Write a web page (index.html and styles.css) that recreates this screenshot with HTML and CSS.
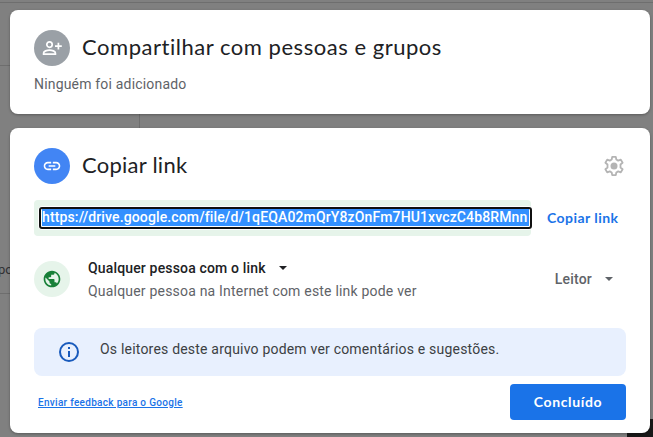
FILE: index.html
```html
<!DOCTYPE html>
<html lang="pt-BR">
<head>
<meta charset="utf-8">
<title>Compartilhar</title>
<link rel="stylesheet" href="styles.css">
</head>
<body>
<div class="backdrop">
  <i class="rule rule-top"></i><i class="rule rule-upper"></i><i class="rule rule-middle"></i><i class="rule rule-lower"></i>
  <span class="behind">po</span><i class="corner"></i>
</div>
<main class="dialog">
  <section class="card people">
    <header class="heading">
      <span class="disc gray"><svg width="24" height="24" viewBox="0 0 24 24" fill="none" stroke="#fff" stroke-width="1.7"><circle cx="9.5" cy="8.6" r="2.7"/><path d="M3.6 18.1v-1.1c0-1.8 3.4-2.9 5.9-2.9s5.9 1.1 5.9 2.9v1.1z"/><path d="M18.4 6.8v6.8M15 10.2h6.8"/></svg></span>
      <h1><span class="title-share">Compartilhar com pessoas e grupos</span></h1>
    </header>
    <p class="nobody">Ninguém foi adicionado</p>
  </section>
  <section class="card link-card">
    <header class="heading">
      <span class="disc blue"><svg width="20" height="20" viewBox="0 0 24 24" fill="#fff"><path d="M3.9 12c0-1.71 1.39-3.1 3.1-3.1h4V7H7c-2.76 0-5 2.24-5 5s2.24 5 5 5h4v-1.9H7c-1.71 0-3.1-1.39-3.1-3.1zM8 13h8v-2H8v2zm9-6h-4v1.9h4c1.71 0 3.1 1.39 3.1 3.1s-1.39 3.1-3.1 3.1h-4V17h4c2.76 0 5-2.24 5-5s-2.24-5-5-5z"/></svg></span>
      <h1><span class="title-copy">Copiar link</span></h1>
      <svg class="gear" width="24" height="24" viewBox="0 0 24 24"><path fill="none" stroke="#b4b4b4" stroke-width="1.8" stroke-linejoin="round" d="M10.2 2.8h3.6l.5 2.7 1.9 1.1 2.6-1 1.8 3.1-2.1 1.8v3l2.1 1.8-1.8 3.1-2.6-1-1.9 1.1-.5 2.7h-3.6l-.5-2.7-1.9-1.1-2.6 1-1.8-3.1 2.1-1.8v-3L3.400 8.700l1.800-3.100 2.600 1 1.900-1.100z"/><circle cx="12" cy="12" r="3.5" fill="#b4b4b4"/></svg>
    </header>
    <div class="url-row">
      <div class="url-bg"><div class="url-box"><span class="url">https://drive.google.com/file/d/1qEQA02mQrY8zOnFm7HU1xvczC4b8RMnn</span></div></div>
      <span class="copy">Copiar link</span>
    </div>
    <div class="access">
      <span class="disc green"><svg width="20" height="20" viewBox="0 0 24 24" fill="#188038"><path d="M12 2C6.480 2 2 6.480 2 12s4.480 10 10 10 10-4.480 10-10S17.520 2 12 2zm-1 17.930c-3.950-.49-7-3.850-7-7.930 0-.62.080-1.210.210-1.790L9 15v1c0 1.100.900 2 2 2v1.930zm6.900-2.540c-.26-.81-1-1.390-1.900-1.390h-1v-3c0-.55-.45-1-1-1H8v-2h2c.55 0 1-.45 1-1V7h2c1.100 0 2-.9 2-2v-.41c2.930 1.190 5 4.060 5 7.410 0 2.080-.8 3.970-2.100 5.390z"/></svg></span>
      <div class="who">
        <div class="who-name"><span>Qualquer pessoa com o link</span><i class="caret"></i></div>
        <div class="who-info">Qualquer pessoa na Internet com este link pode ver</div>
      </div>
      <div class="role"><span>Leitor</span><i class="caret"></i></div>
    </div>
    <div class="notice">
      <svg width="24" height="24" viewBox="0 0 24 24"><circle cx="12" cy="12" r="9" fill="none" stroke="#185abc" stroke-width="2"/><path fill="#185abc" d="M11 7h2v2h-2zM11 11h2v6h-2z"/></svg>
      <span>Os leitores deste arquivo podem ver comentários e sugestões.</span>
    </div>
    <footer class="actions">
      <a class="feedback">Enviar feedback para o Google</a>
      <button class="done">Concluído</button>
    </footer>
  </section>
</main>
</body>
</html>
```
FILE: styles.css
```css
* { box-sizing: border-box; }
body { margin: 0; height: 437px; overflow: hidden; background: #808080; font: 14px/20px Roboto, sans-serif; color: #202124; }
.backdrop { position: absolute; inset: 0; overflow: hidden; }
.rule { position: absolute; background: #6e6e6e; }
.rule-top { left: 0; top: 2px; width: 653px; height: 1px; }
.rule-upper { left: 0; top: 65px; width: 10px; height: 1px; }
.rule-middle { left: 139px; top: 114px; width: 1px; height: 14px; }
.rule-lower { left: 0; top: 293px; width: 10px; height: 1px; }
.behind { position: absolute; left: -2px; top: 260px; font-size: 13px; color: #303134; }
.corner { position: absolute; left: 627px; top: 419px; width: 26px; height: 18px; background: #181818; }
.dialog { position: relative; width: 640px; margin: 10px 0 0 10px; display: flex; flex-direction: column; gap: 14px; }
.card { background: #fff; border-radius: 8px; padding: 20px 24px 0; box-shadow: 0 1px 3px rgba(0,0,0,.3); }
.people { height: 104px; }
.link-card { height: 305px; }
.heading { display: flex; align-items: center; height: 36px; }
.disc { display: flex; flex: none; align-items: center; justify-content: center; width: 36px; height: 36px; border-radius: 50%; }
.gray { background: #9aa0a6; }
.blue { background: #4285f4; }
.green { background: #e6f4ea; }
h1 { margin: 0 0 2px 12px; font: 400 22px/28px Lato, sans-serif; color: #202124; white-space: nowrap; }
.title-share { letter-spacing: .53px; }
.title-copy { letter-spacing: .25px; }
.nobody { margin: 8px 0 0; letter-spacing: .18px; color: #5f6368; }
.gear { margin-left: auto; }
.url-row { display: flex; height: 36px; margin-top: 16px; align-items: center; }
.url-bg { width: 497px; height: 36px; padding: 6px 0 0 4px; border-radius: 4px; background: #e6f4ea; }
.url-box { width: 495px; height: 24px; padding: 1px; border: 1px solid #fff; border-radius: 4px; background: #fff; outline: 2px solid #101010; outline-offset: -3px; }
.url { display: block; width: 487px; height: 17px; margin: 1px 0 0 2px; white-space: nowrap; background: #3390ff; color: #fff; font-weight: 500; line-height: 16px; letter-spacing: .13px; }
.copy { margin-left: 16px; color: #1a73e8; font: 700 14px/20px Lato, sans-serif; letter-spacing: .45px; }
.access { display: flex; margin-top: 22px; height: 42px; }
.access .disc { margin-top: 3px; }
.who { margin-left: 18px; }
.who-name { display: flex; align-items: center; font-weight: 500; letter-spacing: .16px; }
.who-info { margin-top: 3px; letter-spacing: .2px; color: #5f6368; }
.caret { width: 0; height: 0; border: solid transparent; border-width: 4px 4px 0; border-top-color: currentColor; }
.who-name .caret { margin-left: 13px; }
.role { display: flex; align-items: center; height: 42px; margin-left: auto; padding-right: 13px; gap: 13px; font-weight: 500; letter-spacing: .2px; color: #5f6368; }
.notice { display: flex; height: 48px; margin-top: 28px; padding: 12px 23px; border-radius: 8px; background: #e8f0fe; color: #3c4043; letter-spacing: .2px; }
.notice span { margin: -1px 0 0 19px; }
.actions { display: flex; align-items: center; justify-content: space-between; height: 36px; margin-top: 8px; padding-left: 4px; }
.feedback { margin-top: 2px; color: #1a73e8; font-weight: 500; font-size: 10px; line-height: 16px; letter-spacing: .3px; text-decoration: underline; }
.done { width: 116px; height: 36px; padding: 0; border: 0; border-radius: 4px; background: #1a73e8; color: #fff; font: 700 14px/20px Lato, sans-serif; letter-spacing: .65px; }
```
